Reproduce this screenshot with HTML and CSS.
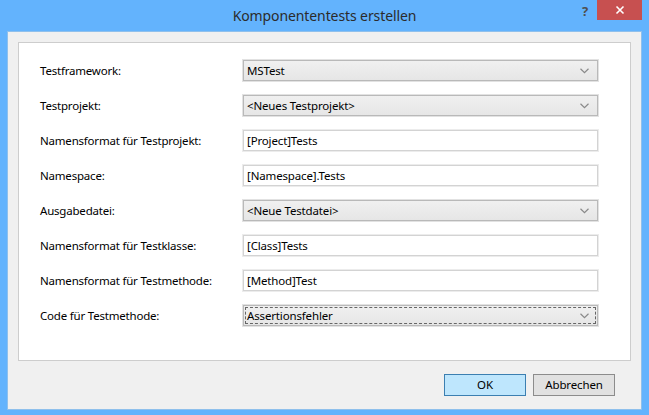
FILE: index.html
```html
<!DOCTYPE html>
<html lang="de">
<head>
<meta charset="utf-8">
<title>Komponententests erstellen</title>
<link rel="stylesheet" href="styles.css">
</head>
<body>
<div class="window">
  <div class="titlebar">
    <div class="title">Komponententests erstellen</div>
    <div class="help">?</div>
    <div class="close"><svg width="10" height="10" viewBox="0 0 10 10"><path d="M1.5 1.5 L8.5 8.5 M8.5 1.5 L1.5 8.5" stroke="#fff" stroke-width="1.6" fill="none"/></svg></div>
  </div>
  <div class="client">
    <div class="panel">
      <div class="row"><div class="label">Testframework:</div><div class="field combo"><span>MSTest</span><svg class="chev" width="9" height="6" viewBox="0 0 9 6"><path d="M0.5 0.8 L4.5 4.6 L8.5 0.8" stroke="#8a8a8a" stroke-width="1.2" fill="none"/></svg></div></div>
      <div class="row"><div class="label">Testprojekt:</div><div class="field combo"><span>&lt;Neues Testprojekt&gt;</span><svg class="chev" width="9" height="6" viewBox="0 0 9 6"><path d="M0.5 0.8 L4.5 4.6 L8.5 0.8" stroke="#8a8a8a" stroke-width="1.2" fill="none"/></svg></div></div>
      <div class="row"><div class="label">Namensformat für Testprojekt:</div><div class="field text"><span>[Project]Tests</span></div></div>
      <div class="row"><div class="label">Namespace:</div><div class="field text"><span>[Namespace].Tests</span></div></div>
      <div class="row"><div class="label">Ausgabedatei:</div><div class="field combo"><span>&lt;Neue Testdatei&gt;</span><svg class="chev" width="9" height="6" viewBox="0 0 9 6"><path d="M0.5 0.8 L4.5 4.6 L8.5 0.8" stroke="#8a8a8a" stroke-width="1.2" fill="none"/></svg></div></div>
      <div class="row"><div class="label">Namensformat für Testklasse:</div><div class="field text"><span>[Class]Tests</span></div></div>
      <div class="row"><div class="label">Namensformat für Testmethode:</div><div class="field text"><span>[Method]Test</span></div></div>
      <div class="row"><div class="label">Code für Testmethode:</div><div class="field combo focus"><span>Assertionsfehler</span><svg class="chev" width="9" height="6" viewBox="0 0 9 6"><path d="M0.5 0.8 L4.5 4.6 L8.5 0.8" stroke="#8a8a8a" stroke-width="1.2" fill="none"/></svg></div></div>
    </div>
    <div class="buttons">
      <div class="btn ok">OK</div>
      <div class="btn">Abbrechen</div>
    </div>
  </div>
</div>
</body>
</html>
```
FILE: styles.css
```css
* { box-sizing: border-box; }
html, body { margin: 0; padding: 0; }
body {
  width: 649px;
  height: 415px;
  background: #63b3fd;
  font-family: "Noto Sans", "Open Sans", sans-serif;
  font-size: 11.5px;
  letter-spacing: -0.15px;
  color: #000;
  overflow: hidden;
}
.window {
  display: flex;
  flex-direction: column;
  width: 649px;
  height: 415px;
}
.titlebar {
  height: 31px;
  display: flex;
  align-items: flex-start;
}
.title {
  flex: 1;
  text-align: center;
  font-size: 14px;
  letter-spacing: -0.1px;
  color: #2b2b2b;
  line-height: 32px;
  padding-left: 74px;
}
.help {
  width: 20px;
  font-size: 13px;
  font-weight: bold;
  letter-spacing: 0;
  color: #4f4f4f;
  line-height: 22px;
  text-align: center;
  margin-right: 2px;
}
.close {
  width: 45px;
  height: 20px;
  margin-right: 7px;
  background: #c75050;
  display: flex;
  align-items: center;
  justify-content: center;
}
.client {
  margin: 0 7px 5px 7px;
  flex: 1;
  background: #f0f0f0;
  border: 1px solid #8fc0ec;
  padding: 10px 10px 12px 10px;
  display: flex;
  flex-direction: column;
}
.panel {
  height: 319px;
  background: #fff;
  border: 1px solid #cdcdcd;
  padding: 17px 32px 0 21px;
  display: flex;
  flex-direction: column;
  gap: 14px;
}
.row {
  display: flex;
  align-items: center;
  height: 21px;
}
.label {
  width: 203px;
  color: #000;
  letter-spacing: -0.2px;
}
.field {
  flex: 1;
  height: 21px;
  display: flex;
  align-items: center;
  padding: 0 8px 0 3px;
  position: relative;
}
.field span { flex: 1; }
.combo {
  background: linear-gradient(#f0f0f0, #e6e6e6);
  border: 1px solid #b9b9b9;
  box-shadow: 0 0 0 1px #e2e2e2;
}
.text {
  background: #fff;
  border: 1px solid #d3d3d3;
  box-shadow: 0 0 0 1px #ececec;
}
.chev { display: block; }
.focus::after {
  content: "";
  position: absolute;
  left: 1px;
  top: 1px;
  right: 1px;
  bottom: 1px;
  border: 1px dashed #666;
}
.buttons {
  margin-top: 13px;
  display: flex;
  justify-content: flex-end;
  gap: 7px;
  padding-right: 16px;
}
.btn {
  width: 82px;
  height: 22px;
  border: 1px solid #8c8c8c;
  background: #e1e1e1;
  text-align: center;
  line-height: 20px;
  color: #000;
}
.btn.ok {
  background: #bee6fd;
  border-color: #3c7fb1;
}
```
